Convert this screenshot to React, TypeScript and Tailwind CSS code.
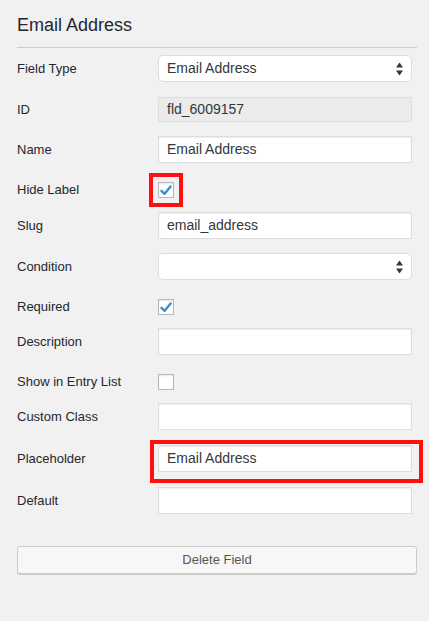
import React from "react";

const font = { fontFamily: '"Liberation Sans", Arial, sans-serif' };

const SelectArrows = () => (
  <svg width="7" height="13" viewBox="0 0 7 13" className="absolute right-[8px] top-1/2 -translate-y-1/2">
    <polygon points="3.5,0 7,5 0,5" fill="#32373c" />
    <polygon points="0,8 7,8 3.5,13" fill="#32373c" />
  </svg>
);

const Check = ({ checked }: { checked?: boolean }) => (
  <div className="w-[16px] h-[16px] bg-white border border-[#b4b9be] shadow-[inset_0_1px_2px_rgba(0,0,0,0.1)] flex items-center justify-center">
    {checked && (
      <svg width="12" height="11" viewBox="0 0 12 11">
        <path d="M1.5 5.8 L4.6 8.8 L10.6 1.4" stroke="#3a8fce" strokeWidth="2.4" fill="none" strokeLinecap="round" strokeLinejoin="round" />
      </svg>
    )}
  </div>
);

interface IRowProps {
  label: string;
  mt: string;
  children: React.ReactNode;
}

const Row = ({ label, mt, children }: IRowProps) => (
  <div className={`flex items-center ${mt}`}>
    <label className="w-[141px] shrink-0 text-[13px] leading-[16px] text-[#23282d]">{label}</label>
    <div className="w-[255px]">{children}</div>
  </div>
);

const Input = ({ value, disabled }: { value?: string; disabled?: boolean }) => (
  <div
    className={
      disabled
        ? "h-[25px] border border-[#dedede] bg-[#ebebeb] px-[8px] flex items-center text-[14px] text-[#32373c]"
        : "h-[27px] border border-[#dddddd] bg-white shadow-[inset_0_1px_2px_rgba(0,0,0,0.07)] px-[8px] flex items-center text-[14px] text-[#32373c]"
    }
  >
    {value}
  </div>
);

const Select = ({ value }: { value?: string }) => (
  <div className="relative h-[27px] rounded-[5px] border border-[#dddddd] bg-white px-[8px] flex items-center text-[14px] text-[#32373c]">
    {value}
    <SelectArrows />
  </div>
);

export default function App() {
  return (
    <div style={font} className="w-[429px] h-[621px] bg-[#f1f1f1] px-[17px] pt-[13px]">
      <h2 className="text-[18px] leading-[24px] text-[#23282d] w-[400px]">Email Address</h2>
      <div className="w-[400px] h-px bg-[#cccccc] mt-[10px]" />

      <Row label="Field Type" mt="mt-[7px]">
        <Select value="Email Address" />
      </Row>
      <Row label="ID" mt="mt-[15px]">
        <Input value="fld_6009157" disabled />
      </Row>
      <Row label="Name" mt="mt-[14px]">
        <Input value="Email Address" />
      </Row>
      <Row label="Hide Label" mt="mt-[19px]">
        <div className="relative w-[16px] h-[16px]">
          <Check checked />
          <div className="absolute -left-[9px] -top-[9px] w-[34px] h-[34px] border-[4px] border-[#ff1010]" />
        </div>
      </Row>
      <Row label="Slug" mt="mt-[14px]">
        <Input value="email_address" />
      </Row>
      <Row label="Condition" mt="mt-[14px]">
        <Select />
      </Row>
      <Row label="Required" mt="mt-[19px]">
        <Check checked />
      </Row>
      <Row label="Description" mt="mt-[13px]">
        <Input />
      </Row>
      <Row label="Show in Entry List" mt="mt-[19px]">
        <Check />
      </Row>
      <Row label="Custom Class" mt="mt-[13px]">
        <Input />
      </Row>
      <Row label="Placeholder" mt="mt-[15px]">
        <div className="relative">
          <Input value="Email Address" />
          <div className="absolute -left-[8px] -top-[5px] w-[273px] h-[43px] border-[4px] border-[#ff1010]" />
        </div>
      </Row>
      <Row label="Default" mt="mt-[15px]">
        <Input />
      </Row>

      <button className="mt-[32px] w-[400px] h-[28px] rounded-[3px] border border-[#cccccc] bg-[#f7f7f7] shadow-[0_1px_0_#cccccc] text-[13px] text-[#555555]">
        Delete Field
      </button>
    </div>
  );
}
